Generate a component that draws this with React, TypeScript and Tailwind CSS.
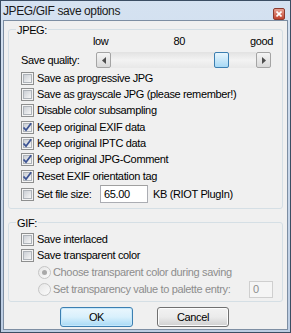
import type { ReactNode } from "react";

function CheckBox({ checked }: { checked?: boolean }) {
  return (
    <span className="flex h-[13px] w-[13px] shrink-0 items-center justify-center border border-[#8e8f8f] bg-[#f4f4f4]">
      <span className="flex h-[9px] w-[9px] items-center justify-center border border-[#aeb3b9] bg-gradient-to-br from-[#cbcfd5] to-[#f6f6f6]">
        {checked && (
          <svg width="9" height="9" viewBox="0 0 9 9" className="overflow-visible">
            <path d="M0.5 4.5 L3 7.2 L8.2 0.2" fill="none" stroke="#3c5393" strokeWidth="1.8" />
          </svg>
        )}
      </span>
    </span>
  );
}

function Radio({ checked }: { checked?: boolean }) {
  return (
    <span className="flex h-[13px] w-[13px] shrink-0 items-center justify-center rounded-full border border-[#c5c5c5] bg-gradient-to-br from-[#e6e6e6] to-[#fbfbfb]">
      {checked && <span className="h-[5px] w-[5px] rounded-full bg-[#a9a9a9]" />}
    </span>
  );
}

function CheckRow({ label, checked }: { label: string; checked?: boolean }) {
  return (
    <div className="flex h-[16.33px] items-center gap-[3px] pl-[12px]">
      <CheckBox checked={checked} />
      <span>{label}</span>
    </div>
  );
}

function Group({ title, className, children }: { title: string; className?: string; children: ReactNode }) {
  return (
    <div className={`relative mx-[4px] rounded-[3px] border border-[#d5dfe5] ${className ?? ""}`}>
      <span className="absolute left-[7px] top-[-6px] bg-[#f0f0f0] px-[1px]">{title}</span>
      {children}
    </div>
  );
}

function ArrowButton({ dir }: { dir: "left" | "right" }) {
  return (
    <span className="flex h-[16px] w-[15px] shrink-0 items-center justify-center rounded-[2px] border border-[#a4a4a4] bg-gradient-to-b from-[#f5f5f5] to-[#d9d9d9]">
      <svg width="4" height="7" viewBox="0 0 4 7">
        {dir === "left" ? <path d="M4 0 L0 3.5 L4 7 Z" fill="#4d4d4d" /> : <path d="M0 0 L4 3.5 L0 7 Z" fill="#4d4d4d" />}
      </svg>
    </span>
  );
}

export default function App() {
  return (
    <div className="h-[333px] w-[291px] font-['Liberation_Sans',Arial,sans-serif] text-[11px] leading-[13px] tracking-[-0.35px] text-black">
      <div className="flex h-full w-full flex-col border border-[#3b4d63] bg-gradient-to-b from-[#d5e2f1] to-[#bccde3]">
        {/* title bar */}
        <div className="flex h-[19px] shrink-0 items-center pl-[2px] pr-[5px] pt-[1px]">
          <span className="text-[12px] tracking-[-0.4px] text-[#1a1a1a]">JPEG/GIF save options</span>
          <span className="ml-auto flex h-[12px] w-[12px] items-center justify-center self-start mt-[6px] rounded-[2px] border border-[#8c3a2e] bg-gradient-to-b from-[#e8a193] to-[#c0412c]">
            <svg width="6" height="6" viewBox="0 0 6 6">
              <path d="M0.5 0.5 L5.5 5.5 M5.5 0.5 L0.5 5.5" stroke="#fff" strokeWidth="1.6" />
            </svg>
          </span>
        </div>

        {/* client area */}
        <div className="mx-[2px] mb-[2px] flex flex-1 flex-col border border-[#7d8ea3] bg-[#f0f0f0]">
          <Group title="JPEG:" className="mt-[8px] pb-[5px]">
            <div className="mt-[5px] flex h-[13px] items-center pl-[84px] pr-[9px]">
              <span>low</span>
              <span className="ml-[65px]">80</span>
              <span className="ml-auto">good</span>
            </div>
            <div className="mt-[4px] flex h-[16px] items-center pl-[12px]">
              <span className="w-[75px] shrink-0">Save quality:</span>
              <div className="flex h-[16px] w-[175px] shrink-0">
                <ArrowButton dir="left" />
                <div className="flex flex-1 bg-gradient-to-b from-[#e2e2e2] via-[#f3f3f3] to-[#e8e8e8]">
                  <span className="ml-[103px] h-[16px] w-[15px] rounded-[2px] border border-[#3c7fb1] bg-gradient-to-b from-[#e9f6fd] to-[#a7d9f5]" />
                </div>
                <ArrowButton dir="right" />
              </div>
            </div>
            <div className="mt-[2px]">
              <CheckRow label="Save as progressive JPG" />
              <CheckRow label="Save as grayscale JPG (please remember!)" />
              <CheckRow label="Disable color subsampling" />
              <CheckRow label="Keep original EXIF data" checked />
              <CheckRow label="Keep original IPTC data" checked />
              <CheckRow label="Keep original JPG-Comment" checked />
              <CheckRow label="Reset EXIF orientation tag" checked />
            </div>
            <div className="mt-[1px] flex h-[18px] items-center pl-[12px]">
              <CheckBox />
              <span className="ml-[3px] w-[63px]">Set file size:</span>
              <span className="flex h-[18px] w-[48px] items-center border border-[#abadb3] border-t-[#a0a0a0] bg-white pl-[3px]">
                65.00
              </span>
              <span className="ml-[5px]">KB (RIOT PlugIn)</span>
            </div>
          </Group>

          <Group title="GIF:" className="mt-[13px] pb-[3px]">
            <div className="mt-[8px]">
              <div className="flex h-[16px] items-center gap-[3px] pl-[12px]">
                <CheckBox />
                <span>Save interlaced</span>
              </div>
              <div className="flex h-[16px] items-center gap-[3px] pl-[12px]">
                <CheckBox />
                <span>Save transparent color</span>
              </div>
            </div>
            <div className="mt-[1px] text-[#8d8d8d]">
              <div className="flex h-[17px] items-center gap-[2px] pl-[29px]">
                <Radio checked />
                <span>Choose transparent color during saving</span>
              </div>
              <div className="flex h-[17px] items-center gap-[2px] pl-[29px] pr-[9px]">
                <Radio />
                <span>Set transparency value to palette entry:</span>
                <span className="ml-auto flex h-[17px] w-[24px] items-center border border-[#cfcfcf] bg-[#f5f5f5] pl-[3px]">
                  0
                </span>
              </div>
            </div>
          </Group>

          <div className="mt-[5px] flex pl-[56px]">
            <button className="h-[20px] w-[73px] rounded-[3px] border border-[#3c7fb1] bg-gradient-to-b from-[#eaf6fd] via-[#d9f0fc] to-[#a7d9f5] shadow-[inset_0_0_0_1px_#c6e8fb]">
              OK
            </button>
            <button className="ml-[24px] h-[20px] w-[72px] rounded-[3px] border border-[#707070] bg-gradient-to-b from-[#f2f2f2] via-[#ebebeb] to-[#cfcfcf] shadow-[inset_0_0_0_1px_#fcfcfc]">
              Cancel
            </button>
          </div>
        </div>
      </div>
    </div>
  );
}
